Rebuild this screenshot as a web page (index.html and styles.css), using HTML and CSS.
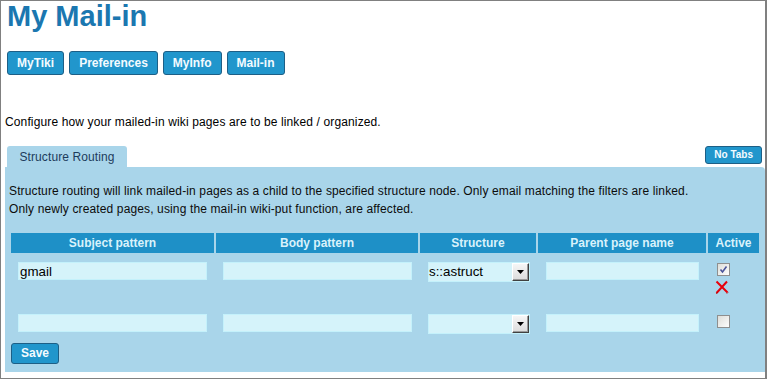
FILE: index.html
```html
<!DOCTYPE html>
<html lang="en">
<head>
<meta charset="utf-8">
<title>My Mail-in</title>
<link rel="stylesheet" href="styles.css">
</head>
<body>
<div class="frame">
  <h1 class="title">My Mail-in</h1>
  <nav class="nav">
    <a class="btn" href="#">MyTiki</a>
    <a class="btn" href="#">Preferences</a>
    <a class="btn" href="#">MyInfo</a>
    <a class="btn" href="#">Mail-in</a>
  </nav>
  <p class="intro">Configure how your mailed-in wiki pages are to be linked / organized.</p>
  <div class="tabbar">
    <span class="tab">Structure Routing</span>
    <a class="btn btn-small" href="#">No Tabs</a>
  </div>
  <div class="panel">
    <p class="desc">Structure routing will link mailed-in pages as a child to the specified structure node. Only email matching the filters are linked.<br>Only newly created pages, using the mail-in wiki-put function, are affected.</p>
    <table class="grid">
      <thead>
        <tr>
          <th class="c1">Subject pattern</th>
          <th class="c2">Body pattern</th>
          <th class="c3">Structure</th>
          <th class="c4">Parent page name</th>
          <th class="c5">Active</th>
        </tr>
      </thead>
      <tbody>
        <tr class="row-first">
          <td><input class="field w189" type="text" value="gmail"></td>
          <td><input class="field w189" type="text" value=""></td>
          <td>
            <div class="sel">
              <span class="sel-text">s::astruct</span>
              <span class="sel-btn"><svg width="7" height="4" viewBox="0 0 7 4"><path d="M0 0H7L3.5 4Z" fill="#000"/></svg></span>
            </div>
          </td>
          <td><input class="field w153" type="text" value=""></td>
          <td>
            <div class="active">
              <svg class="chk" width="13" height="13" viewBox="0 0 13 13">
                <defs><linearGradient id="g1" x1="0" y1="0" x2="1" y2="1"><stop offset="0" stop-color="#dcdcd7"/><stop offset="1" stop-color="#ffffff"/></linearGradient></defs>
                <rect x="0.5" y="0.5" width="12" height="12" fill="url(#g1)" stroke="#8e8f8f"/>
                <path d="M3.5 6.5L5.5 9L9.5 3.5" fill="none" stroke="#4b559b" stroke-width="1.6"/>
              </svg>
              <svg class="del" width="14" height="14" viewBox="0 0 14 14">
                <path d="M1.5 1.5L12.5 12.5M12 1.5L1.5 13" stroke="#e8000b" stroke-width="2"/>
                <path d="M1 13.5L2.5 12.5M12 13.5L13 12.5" stroke="#a00" stroke-width="1"/>
              </svg>
            </div>
          </td>
        </tr>
        <tr>
          <td><input class="field w189" type="text" value=""></td>
          <td><input class="field w189" type="text" value=""></td>
          <td>
            <div class="sel">
              <span class="sel-text"></span>
              <span class="sel-btn"><svg width="7" height="4" viewBox="0 0 7 4"><path d="M0 0H7L3.5 4Z" fill="#000"/></svg></span>
            </div>
          </td>
          <td><input class="field w153" type="text" value=""></td>
          <td>
            <div class="active">
              <svg class="chk" width="13" height="13" viewBox="0 0 13 13">
                <defs><linearGradient id="g2" x1="0" y1="0" x2="1" y2="1"><stop offset="0" stop-color="#dcdcd7"/><stop offset="1" stop-color="#ffffff"/></linearGradient></defs>
                <rect x="0.5" y="0.5" width="12" height="12" fill="url(#g2)" stroke="#8e8f8f"/>
              </svg>
            </div>
          </td>
        </tr>
      </tbody>
    </table>
    <button class="btn btn-save" type="button">Save</button>
  </div>
</div>
</body>
</html>
```

FILE: styles.css
```css
html, body {
  margin: 0;
  padding: 0;
  background: #ffffff;
}

body {
  font-family: "Liberation Sans", Arial, sans-serif;
  font-size: 12px;
  color: #000;
}

.frame {
  box-sizing: border-box;
  width: 767px;
  height: 379px;
  border: 1px solid #808080;
  border-right-width: 2px;
  padding: 0 0 0 4px;
  overflow: hidden;
}

.title {
  margin: 0 0 20px 2px;
  font-size: 29px;
  line-height: 30px;
  font-weight: bold;
  color: #1b77b0;
}

.nav {
  display: flex;
  gap: 5px;
  margin-left: 2px;
}

.btn {
  display: inline-block;
  box-sizing: border-box;
  height: 24px;
  padding: 0 9px;
  border: 1px solid #1d5f86;
  border-radius: 3px;
  background: #2196cc;
  color: #f4fbff;
  font-family: "Liberation Sans", Arial, sans-serif;
  font-size: 12px;
  font-weight: bold;
  line-height: 22px;
  text-decoration: none;
}

.intro {
  margin: 40px 0 0 0;
  line-height: 14px;
  letter-spacing: 0.13px;
}

.tabbar {
  display: flex;
  justify-content: space-between;
  align-items: flex-start;
  margin-top: 17px;
  padding-right: 3px;
}

.tab {
  display: block;
  width: 120px;
  height: 21px;
  box-sizing: border-box;
  margin-left: 2px;
  padding-top: 4px;
  background: #a9d5ea;
  border-radius: 3px 3px 0 0;
  color: #1d3c5c;
  text-align: center;
  line-height: 14px;
  letter-spacing: 0.1px;
}

.btn-small {
  height: 18px;
  padding: 0 8px;
  font-size: 10px;
  line-height: 16px;
  border-radius: 3px;
}

.panel {
  background: #a9d5ea;
  border-radius: 0 4px 0 0;
  padding: 15px 3px 8px 4px;
}

.desc {
  margin: 0 0 13px 0;
  line-height: 18px;
  color: #0c0c0c;
  letter-spacing: 0.13px;
}

.grid {
  width: 752px;
  table-layout: fixed;
  border-collapse: separate;
  border-spacing: 2px;
}

.grid th {
  height: 20px;
  padding: 0;
  background: #1e90c7;
  color: #d9f2fb;
  font-size: 12px;
  font-weight: bold;
  text-align: center;
  line-height: 20px;
}

.c1 { width: 203px; }
.c2 { width: 202px; }
.c3 { width: 116px; }
.c4 { width: 168px; }
.c5 { width: 51px; }

.grid td {
  padding: 7px;
  vertical-align: top;
}

.field {
  display: block;
  box-sizing: border-box;
  height: 18px;
  margin: 0;
  padding: 0 1px;
  border: 1px solid #c4f1fb;
  background: #d5f3fa;
  font-family: "Liberation Sans", Arial, sans-serif;
  font-size: 13.33px;
  color: #000;
  outline: none;
}

.w189 { width: 189px; }
.w153 { width: 153px; margin-left: 1px; }

.sel {
  display: flex;
  box-sizing: border-box;
  width: 102px;
  height: 20px;
  margin-left: 1px;
  border: 1px solid #c4f1fb;
  background: #d5f3fa;
}

.sel-text {
  flex: 1;
  padding-left: 0;
  font-size: 13.33px;
  line-height: 18px;
  color: #000;
}

.sel-btn {
  display: flex;
  align-items: center;
  justify-content: center;
  box-sizing: border-box;
  width: 17px;
  height: 18px;
  background: linear-gradient(#f6f6f6, #dcdcdc);
  border-top: 1px solid #ffffff;
  border-left: 1px solid #ffffff;
  border-right: 1px solid #404040;
  border-bottom: 1px solid #404040;
  box-shadow: inset -1px -1px 0 #9a9a9a;
}

.active {
  display: flex;
  flex-direction: column;
  align-items: flex-start;
  padding-left: 2px;
  padding-bottom: 4px;
}

.chk {
  display: block;
  margin-top: 1px;
}

.del {
  display: block;
  margin-top: 4px;
  margin-left: -2px;
}

.btn-save {
  height: 21px;
  margin-left: 2px;
  padding: 0 9px;
  line-height: 19px;
  cursor: pointer;
}
```
